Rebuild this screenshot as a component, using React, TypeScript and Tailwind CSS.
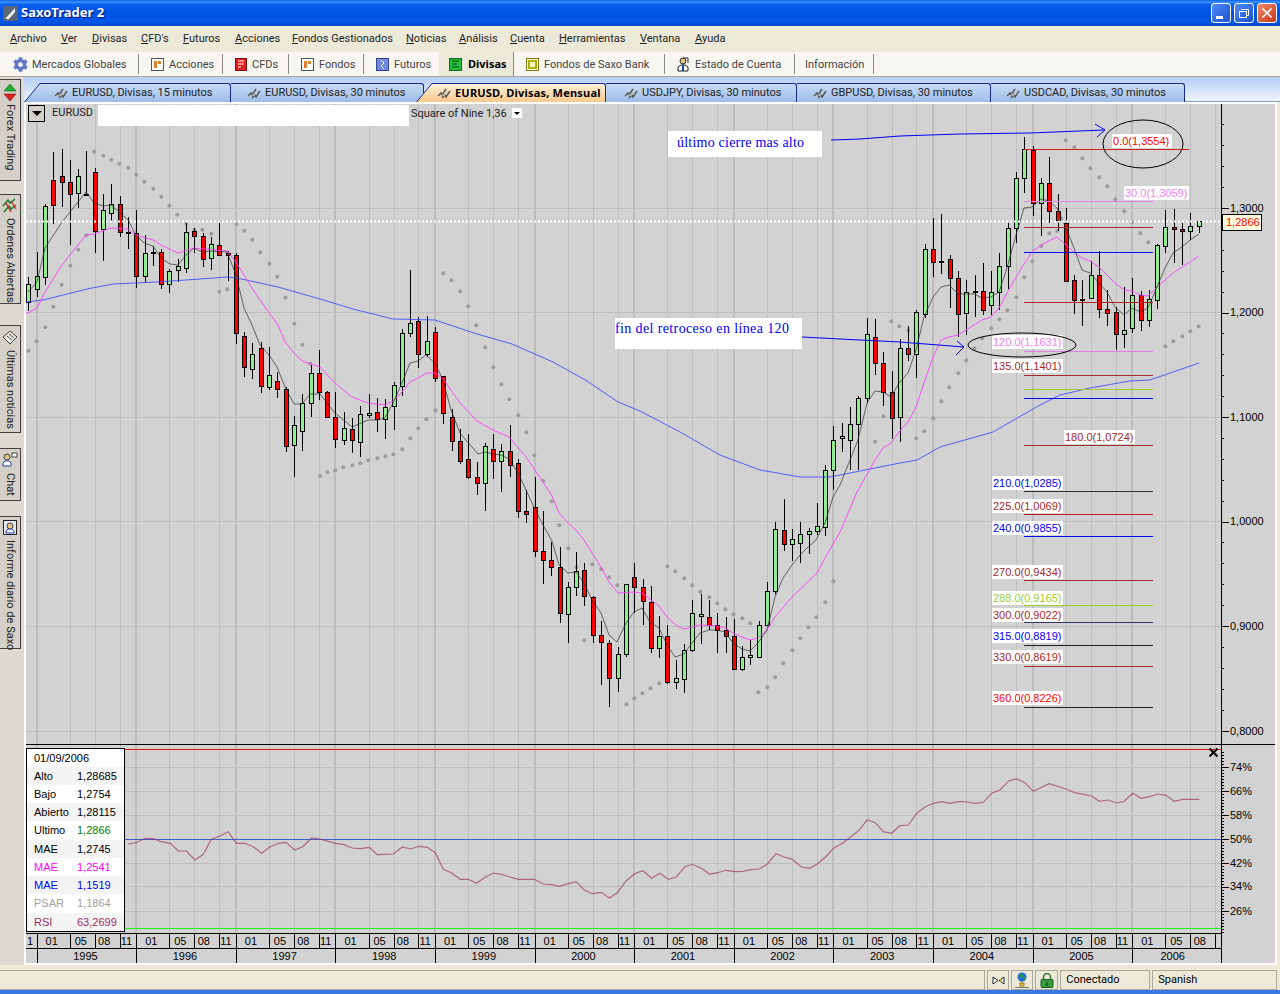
import React from 'react';
import { FaCog } from 'react-icons/fa';
import { X } from 'lucide-react';

type Pt = [number, number];

// crop coords (3x) back to page coords
const crop = (ox: number, oy: number, pts: number[][]): Pt[] => pts.map(([x, y]) => [ox + x / 3, oy + y / 3]);
const line = (pts: Pt[]) => pts.map(([x, y]) => `${x.toFixed(1)},${y.toFixed(1)}`).join(' ');

const monthX = (n: number) => 28.3 + 8.3 * n;

// high, low, body top, body bottom, 1 = green
const candles: number[][] = [
  [277, 311, 284, 302, 1], [252, 297, 276, 289, 1], [204, 285, 206, 277, 1], [152, 224, 180, 205, 0], [149, 207, 176, 182, 0],
  [160, 245, 182, 194, 0], [169, 208, 176, 193, 1], [151, 195, 194, 195, 0], [168, 253, 172, 231, 0], [194, 261, 210, 229, 1],
  [184, 221, 204, 213, 1], [196, 237, 204, 232, 0], [217, 249, 232, 233, 0], [210, 288, 233, 276, 0], [235, 282, 253, 276, 1],
  [246, 266, 252, 253, 0], [249, 289, 252, 284, 0], [269, 293, 271, 284, 1], [259, 282, 266, 270, 1], [223, 273, 232, 268, 1],
  [228, 253, 231, 236, 0], [233, 267, 236, 259, 0], [237, 270, 244, 258, 1], [223, 256, 245, 255, 0], [251, 281, 253, 255, 0],
  [253, 344, 255, 333, 0], [332, 377, 336, 367, 0], [343, 379, 354, 369, 1], [342, 393, 348, 386, 0], [347, 390, 375, 387, 1],
  [372, 398, 381, 389, 0], [387, 452, 389, 446, 0], [416, 477, 425, 445, 1], [394, 451, 403, 431, 1], [365, 417, 373, 403, 1],
  [350, 400, 373, 392, 0], [391, 418, 392, 417, 0], [392, 448, 417, 439, 0], [412, 445, 428, 440, 1], [418, 453, 429, 440, 0],
  [406, 457, 414, 442, 1], [394, 418, 413, 415, 1], [398, 432, 412, 419, 0], [399, 439, 407, 419, 1], [382, 430, 385, 406, 1],
  [329, 396, 333, 386, 1], [270, 337, 323, 333, 1], [317, 368, 321, 354, 0], [316, 357, 341, 354, 1], [327, 382, 332, 378, 0],
  [376, 424, 376, 413, 0], [409, 451, 417, 441, 0], [429, 464, 441, 461, 0], [434, 479, 459, 477, 0], [462, 495, 477, 483, 0],
  [443, 511, 446, 483, 1], [434, 479, 449, 461, 0], [444, 492, 451, 461, 1], [425, 477, 451, 465, 0], [459, 518, 463, 511, 0],
  [490, 523, 511, 514, 0], [477, 557, 507, 551, 0], [511, 584, 551, 560, 0], [542, 576, 560, 567, 0], [547, 623, 567, 613, 0],
  [582, 643, 587, 614, 1], [552, 596, 571, 587, 1], [563, 606, 570, 596, 0], [596, 643, 597, 635, 0], [621, 685, 635, 642, 0],
  [640, 707, 643, 678, 0], [647, 692, 654, 678, 1], [584, 657, 584, 654, 1], [563, 613, 577, 587, 0], [579, 625, 587, 601, 0],
  [586, 653, 602, 648, 0], [616, 658, 636, 648, 1], [625, 684, 636, 682, 0], [660, 689, 678, 682, 1], [644, 693, 650, 679, 1],
  [600, 652, 613, 650, 1], [594, 644, 614, 616, 1], [600, 630, 617, 625, 0], [613, 653, 625, 630, 0], [617, 653, 630, 636, 0],
  [619, 670, 636, 669, 0], [646, 671, 657, 669, 1], [640, 665, 655, 657, 1], [621, 657, 625, 657, 1], [582, 625, 591, 625, 1],
  [522, 594, 529, 591, 1], [499, 551, 530, 544, 0], [529, 561, 539, 544, 1], [522, 563, 534, 543, 1], [528, 554, 531, 534, 1],
  [503, 535, 526, 531, 1], [465, 536, 470, 527, 1], [426, 490, 440, 470, 1], [423, 452, 436, 438, 1], [407, 470, 424, 440, 1],
  [396, 470, 398, 424, 1], [318, 403, 334, 398, 1], [319, 375, 337, 363, 0], [352, 406, 363, 392, 0], [371, 439, 392, 418, 0],
  [339, 442, 348, 417, 1], [326, 361, 348, 354, 0], [310, 378, 312, 354, 1], [244, 318, 249, 314, 1], [218, 277, 249, 262, 0],
  [214, 274, 261, 262, 0], [255, 308, 259, 278, 0], [271, 337, 278, 314, 0], [280, 335, 292, 313, 1], [275, 317, 291, 292, 0],
  [263, 315, 291, 310, 0], [271, 315, 292, 305, 1], [253, 310, 266, 292, 1], [223, 289, 228, 266, 1], [172, 243, 178, 228, 1],
  [137, 193, 149, 178, 1], [146, 216, 150, 203, 0], [178, 236, 183, 203, 1], [157, 223, 183, 211, 0], [194, 231, 211, 220, 0],
  [208, 282, 223, 281, 0], [275, 314, 280, 300, 0], [280, 326, 299, 300, 0], [261, 299, 275, 298, 1], [251, 318, 275, 309, 0],
  [290, 326, 309, 313, 0], [307, 350, 312, 334, 0], [287, 348, 330, 334, 1], [278, 333, 295, 328, 1], [291, 331, 295, 320, 0],
  [290, 327, 299, 320, 1], [244, 309, 245, 300, 1], [210, 253, 227, 246, 1], [209, 263, 227, 229, 0], [223, 265, 229, 231, 0],
  [213, 240, 226, 231, 1], [221, 233, 221, 226, 1],
];

const grayAvg: Pt[] = [[28,292],[37,282],[45,248],[62,222],[86,192],[94,203],[103,206],[111,205],[128,220],[136,235],[144,243],[153,246],[161,258],[170,264],[178,265],[186,255],[194,248],[202,252],[211,251],[227,252],[236,275],[244,308],[252,325],[260,345],[269,355],[277,367],[285,387],[294,404],[302,404],[310,394],[320,394],[335,413],[352,427],[368,420],[377,420],[385,418],[393,403],[402,383],[410,363],[418,361],[426,355],[435,363],[443,380],[451,410],[460,433],[478,454],[485,452],[493,454],[501,455],[509,459],[518,473],[526,490],[534,507],[543,525],[552,541],[559,565],[568,573],[576,572],[584,583],[592,600],[601,613],[609,635],[617,642],[626,623],[634,612],[642,608],[650,622],[659,628],[667,645],[675,657],[684,654],[692,643],[700,633],[709,630],[717,630],[725,632],[733,643],[742,649],[750,651],[758,643],[767,630],[775,597],[783,578],[792,565],[800,555],[808,547],[816,540],[825,523],[833,497],[840,485],[850,460],[858,440],[867,403],[875,391],[883,392],[891,397],[899,383],[908,373],[916,350],[924,317],[933,297],[941,287],[949,285],[958,294],[974,294],[982,298],[991,297],[999,292],[1007,268],[1016,235],[1024,208],[1032,207],[1041,199],[1049,201],[1057,208],[1066,228],[1074,248],[1082,270],[1090,273],[1099,283],[1107,292],[1115,307],[1124,315],[1132,308],[1140,312],[1148,308],[1157,287],[1165,268],[1173,253],[1182,247],[1190,240],[1199,234]];

const pinkAvg: Pt[] = [[26,314],[37,308],[45,292],[62,265],[78,245],[86,235],[94,234],[111,228],[128,229],[136,235],[153,240],[161,245],[178,253],[194,248],[227,251],[236,262],[252,288],[262,303],[278,325],[285,342],[294,353],[302,361],[320,367],[335,383],[352,397],[368,403],[385,405],[393,401],[402,392],[410,382],[418,378],[427,373],[435,373],[443,379],[451,390],[460,403],[477,421],[493,430],[509,437],[526,457],[543,482],[552,496],[559,513],[568,523],[576,530],[584,540],[592,553],[601,567],[609,582],[618,593],[634,592],[642,593],[659,606],[667,617],[677,626],[684,629],[700,625],[717,626],[725,628],[733,633],[742,637],[750,640],[758,638],[767,630],[775,617],[792,597],[817,573],[825,558],[840,532],[857,492],[875,460],[883,448],[891,443],[899,432],[908,422],[916,407],[924,383],[933,357],[941,340],[949,337],[958,335],[966,330],[982,320],[991,317],[999,308],[1007,293],[1016,277],[1024,264],[1032,252],[1041,245],[1057,237],[1066,245],[1074,252],[1082,258],[1090,261],[1099,267],[1115,283],[1124,290],[1132,291],[1140,295],[1148,296],[1157,287],[1165,280],[1173,273],[1199,256]];

const blueAvg: Pt[] = [[26,302],[43,300],[87,289],[113,284],[157,282],[200,279],[227,277],[237,278],[278,287],[320,299],[353,309],[393,319],[435,320],[477,334],[512,344],[553,362],[587,381],[618,402],[640,411],[680,432],[720,455],[760,470],[800,477],[830,477],[860,471],[900,463],[917,460],[940,447],[993,432],[1040,405],[1060,395],[1090,388],[1130,381],[1150,380],[1199,363]];

const rsi: Pt[] = [
  ...crop(0, 740, [[385,312],[409,308],[436,295],[460,296],[484,305],[511,310],[535,333],[559,333],[585,360],[610,343],[634,298],[660,288],[685,275],[709,310],[735,310],[760,320],[785,340],[808,322],[835,310],[858,307],[884,330],[908,320],[935,294]]),
  ...crop(320, 800, [[0,117],[25,124],[48,130],[72,134],[97,144],[121,146],[148,142],[172,164],[220,162],[247,141],[271,147],[298,139],[322,142],[346,158],[370,208],[394,218],[421,238],[445,238],[469,250],[496,232],[520,219],[544,223],[568,230],[595,238],[643,238],[670,252],[694,254],[718,259],[745,251],[769,245],[793,270],[817,281],[844,277],[868,294],[892,278],[919,242],[943,222]]),
  ...crop(640, 770, [[0,305],[10,303],[35,325],[60,310],[85,328],[109,321],[135,290],[157,283],[184,295],[209,312],[233,308],[257,301],[284,305],[308,304],[333,299],[358,297],[382,282],[408,251],[433,261],[457,268],[484,291],[508,295],[532,282],[557,260],[583,233],[607,220],[631,202],[658,180],[682,149],[706,158],[730,185],[755,190],[779,167],[805,165],[830,130],[856,110],[880,100],[905,95],[930,100]]),
  ...crop(960, 740, [[0,184],[20,186],[47,190],[70,187],[95,160],[120,150],[147,122],[170,117],[195,128],[220,154],[268,131],[318,147],[345,158],[395,168],[418,184],[443,180],[470,189],[493,184],[518,160],[543,175],[568,170],[593,162],[618,166],[643,184],[668,178],[718,178]]),
];

const psar: Pt[] = [
  ...crop(0, 125, [[85,677],[110,649],[136,607],[160,545],[185,479],[211,422],[235,374],[259,331],[283,80],[310,92],[334,104],[358,116],[385,128],[409,149],[433,170],[460,191],[484,215],[508,242],[532,269],[559,296],[583,315],[607,314],[634,326],[658,500],[682,493],[709,298],[733,317],[757,344],[781,382],[808,416],[832,455],[856,518],[883,596],[907,659],[931,716]]),
  ...crop(320, 220, [[0,767],[22,757],[46,751],[70,742],[97,736],[121,730],[145,721],[172,715],[196,709],[220,703],[247,688],[271,655],[295,625],[319,598],[346,571],[370,160],[394,181],[421,214],[445,259],[469,316],[496,382],[520,442],[544,493],[568,538],[595,586],[619,637],[643,706]]),
  ...crop(520, 480, [[70,3],[95,64],[118,136],[145,205],[169,262],[193,481],[217,253],[244,268],[268,292],[292,316],[319,673],[343,655],[367,640],[391,625],[418,610],[442,259],[466,274],[493,295],[517,316],[541,335],[568,352],[592,370],[616,388],[640,403],[667,415],[691,430],[715,637],[742,622],[766,592],[790,550],[817,511],[841,475],[865,442],[889,412],[916,367],[940,304]]),
  [[841,557],[850,530],[858,503],[866,470]],
  ...crop(780, 120, [[285,965],[310,889],[334,604],[358,619],[385,631],[409,955],[433,934],[460,895],[484,844],[508,802],[535,760],[559,721],[583,685],[607,655],[634,625],[658,598]]),
  ...crop(1000, 120, [[22,571],[49,532],[73,472],[97,424],[124,378],[148,340],[172,333],[197,61],[223,82],[247,115],[271,145],[298,172],[322,199],[346,238],[373,274],[397,307],[421,340],[445,367],[472,391],[496,679],[520,664],[547,649],[571,634],[596,619]]),
];

const fibLines: [number, string, number?][] = [
  [149, '#d02020', 1189], [201.5, '#e080e0'], [227, '#a52a2a'], [252, '#0000ff'], [302, '#b22222'], [351, '#e080e0'],
  [375.5, '#a52a2a'], [389, '#9acd32'], [398, '#0000ff'], [445, '#a52a2a'], [491, '#303030'], [514, '#b22222'],
  [536, '#0000ff'], [580, '#a52a2a'], [605, '#9acd32'], [622, '#333366'], [645, '#222222'], [666, '#a52a2a'], [707, '#222222'],
];

const fibLabels: [string, number, number, number, string][] = [
  ['0.0(1,3554)', 1113, 141, 60, '#ff0000'],
  ['30.0(1,3059)', 1125, 193, 65, '#ee82ee'],
  ['120.0(1,1631)', 993, 342, 71, '#ee82ee'],
  ['135.0(1,1401)', 993, 366, 71, '#a52a2a'],
  ['180.0(1,0724)', 1065, 437, 71, '#a52a2a'],
  ['210.0(1,0285)', 993, 483, 71, '#0000ff'],
  ['225.0(1,0069)', 993, 506, 71, '#a52a2a'],
  ['240.0(0,9855)', 993, 528, 71, '#0000ff'],
  ['270.0(0,9434)', 993, 572, 71, '#a52a2a'],
  ['288.0(0,9165)', 993, 598, 71, '#9acd32'],
  ['300.0(0,9022)', 993, 615, 71, '#a52a2a'],
  ['315.0(0,8819)', 993, 636, 71, '#0000ff'],
  ['330.0(0,8619)', 993, 657, 71, '#a52a2a'],
  ['360.0(0,8226)', 993, 698, 71, '#ff0000'],
];

const years = ['1995', '1996', '1997', '1998', '1999', '2000', '2001', '2002', '2003', '2004', '2005', '2006'];
const monthSteps: [string, number, number][] = [['01', 0, 4], ['05', 4, 7], ['08', 7, 10], ['11', 10, 12]];

const priceLabels: [string, number][] = [['1,3000', 208], ['1,2000', 312], ['1,1000', 417], ['1,0000', 521], ['0,9000', 626], ['0,8000', 731]];
const rsiLabels: [string, number][] = [['74%', 767], ['66%', 791], ['58%', 815], ['50%', 839], ['42%', 863], ['34%', 886], ['26%', 911]];

const menuItems = [
  { first: 'A', rest: 'rchivo', w: 'w-[51px]' }, { first: 'V', rest: 'er', w: 'w-[31px]' }, { first: 'D', rest: 'ivisas', w: 'w-[49px]' },
  { first: 'C', rest: "FD's", w: 'w-[42px]' }, { first: 'F', rest: 'uturos', w: 'w-[52px]' }, { first: 'A', rest: 'cciones', w: 'w-[57px]' },
  { first: 'F', rest: 'ondos Gestionados', w: 'w-[114px]' }, { first: 'N', rest: 'oticias', w: 'w-[53px]' }, { first: 'A', rest: 'nálisis', w: 'w-[51px]' },
  { first: 'C', rest: 'uenta', w: 'w-[49px]' }, { first: 'H', rest: 'erramientas', w: 'w-[81px]' }, { first: 'V', rest: 'entana', w: 'w-[55px]' },
  { first: 'A', rest: 'yuda', w: 'w-[50px]' },
];

const PageIcon = ({ bg, fg }: { bg: string; fg: string }) => (
  <svg width="13" height="13" viewBox="0 0 13 13" className="shrink-0">
    <rect x="0.5" y="0.5" width="12" height="12" fill={bg} stroke="#555" />
    <path d="M3 3h3v7H3zM7 3h3v3H7z" fill={fg} />
  </svg>
);

const CfdIcon = () => (
  <svg width="12" height="13" viewBox="0 0 12 13" className="shrink-0">
    <rect x="0.5" y="0.5" width="11" height="12" fill="#e02020" stroke="#7a1010" />
    <path d="M3 3h6M3 6h6M3 9h3" stroke="#fff" />
  </svg>
);

const FuturesIcon = () => (
  <svg width="13" height="13" viewBox="0 0 13 13" className="shrink-0">
    <rect x="0.5" y="0.5" width="12" height="12" fill="#6f88e0" stroke="#33408a" />
    <path d="M5 2l3 3-3 3 3 3" stroke="#fff" fill="none" />
  </svg>
);

const FxIcon = () => (
  <svg width="13" height="13" viewBox="0 0 13 13" className="shrink-0">
    <rect x="0.5" y="0.5" width="12" height="12" fill="#1fc13a" stroke="#0c6a1a" />
    <path d="M3 3h7M3 6h5M3 9h7" stroke="#0a3a10" />
  </svg>
);

const SaxoFundIcon = () => (
  <svg width="13" height="13" viewBox="0 0 13 13" className="shrink-0">
    <rect x="0.5" y="0.5" width="12" height="12" fill="#fff8c0" stroke="#7a7a20" />
    <rect x="3" y="3" width="7" height="7" fill="none" stroke="#a8b400" strokeWidth="2" />
  </svg>
);

const PersonIcon = () => (
  <svg width="13" height="15" viewBox="0 0 13 15" className="shrink-0">
    <circle cx="6" cy="4" r="3" fill="#e8c080" stroke="#333" />
    <path d="M6 1h5v5" fill="none" stroke="#333" />
    <path d="M1 14v-4l3-2h4l3 2v4z" fill="#fff" stroke="#222" />
    <path d="M6 8v6" stroke="#2040c0" strokeWidth="2" />
  </svg>
);

const TabChartIcon = () => (
  <svg width="14" height="12" viewBox="0 0 14 12" className="shrink-0">
    <path d="M1 9l3-3 1 2 4-6M5 11l3-3 1 2 4-6" fill="none" stroke="#555" strokeWidth="1.4" />
    <path d="M3 10l3-3 1 2 4-6" fill="none" stroke="#c8c8b8" strokeWidth="0.8" />
  </svg>
);

const toolbarItems = [
  { label: 'Acciones', icon: <PageIcon bg="#fff" fg="#e0802a" />, w: 'w-[84px]', pl: 'pl-[12px]' },
  { label: 'CFDs', icon: <CfdIcon />, w: 'w-[66px]', pl: 'pl-[12px]' },
  { label: 'Fondos', icon: <PageIcon bg="#fff" fg="#e0802a" />, w: 'w-[75px]', pl: 'pl-[12px]' },
  { label: 'Futuros', icon: <FuturesIcon />, w: 'w-[76px]', pl: 'pl-[12px]' },
];

const Toolbar = () => (
  <div className="h-[25px] flex items-stretch bg-[#f7f6f1] border-b border-[#aca899] text-[11px] leading-[18px] text-[#444]">
    <div className="w-[138px] flex items-center gap-[4px] pl-[13px]">
      <FaCog className="text-[#6478c8] shrink-0" size={15} />
      <span className="mt-[1px]">Mercados Globales</span>
    </div>
    {toolbarItems.map((item) => (
      <div key={item.label} className={`${item.w} ${item.pl} flex items-center gap-[5px] border-l border-[#8c8c84] my-[2px]`}>
        {item.icon}
        <span className="mt-[1px]">{item.label}</span>
      </div>
    ))}
    <div className="w-[75px] pl-[10px] flex items-center gap-[6px] bg-[#ece9d8] border-r border-[#8c8c84] text-black font-bold font-['Noto_Sans',sans-serif]">
      <FxIcon />
      <span>Divisas</span>
    </div>
    <div className="w-[150px] pl-[12px] flex items-center gap-[5px] my-[2px]">
      <SaxoFundIcon />
      <span className="mt-[1px]">Fondos de Saxo Bank</span>
    </div>
    <div className="w-[130px] pl-[12px] flex items-center gap-[5px] border-l border-[#8c8c84] my-[2px]">
      <PersonIcon />
      <span className="mt-[1px]">Estado de Cuenta</span>
    </div>
    <div className="w-[80px] pl-[10px] pt-[1px] flex items-center border-x border-[#8c8c84] my-[2px]">Información</div>
  </div>
);

const ChartTab = ({ label, active, slant, w, pl, ml, clip }: { label: string; active?: boolean; slant?: boolean; w: string; pl: string; ml?: string; clip?: string }) => (
  <div className={`${w} ${ml ?? ''} relative h-[19px] shrink-0`}>
    <div
      className={`${clip ?? ''} ${pl} h-full flex items-center gap-[4px] border-t border-r border-[#1a2a8c] rounded-tr-[3px] whitespace-nowrap overflow-hidden ${
        active
          ? "bg-[linear-gradient(180deg,#fdeed8,#fbc98e)] font-bold text-black tracking-[0.2px] font-['Noto_Sans',sans-serif]"
          : 'bg-[linear-gradient(180deg,#c6daf6,#9fbde8)] text-[#222]'
      }`}
    >
      <TabChartIcon />
      <span>{label}</span>
    </div>
    {slant && (
      <svg width="17" height="19" viewBox="0 0 17 19" className="absolute left-0 top-0">
        <path d="M0.5 19L16 0.5" stroke="#1a2a8c" fill="none" />
      </svg>
    )}
  </div>
);

const TabBar = () => (
  <div className="h-[25px] pt-[6px] flex items-start bg-[linear-gradient(180deg,#b4cdf5,#eef3fd)] text-[11px] border-b border-[#7f9db9]">
    <ChartTab label="EURUSD, Divisas, 15 minutos" w="w-[207px]" pl="pl-[30px]" slant clip="[clip-path:polygon(16px_0,100%_0,100%_100%,0_100%)]" />
    <ChartTab label="EURUSD, Divisas, 30 minutos" w="w-[193px]" pl="pl-[16px]" />
    <div className="relative z-10 -ml-[8px]">
      <ChartTab label="EURUSD, Divisas, Mensual" active w="w-[190px]" pl="pl-[21px]" slant clip="[clip-path:polygon(16px_0,100%_0,100%_100%,0_100%)]" />
    </div>
    <ChartTab label="USDJPY, Divisas, 30 minutos" w="w-[191px]" pl="pl-[18px]" />
    <ChartTab label="GBPUSD, Divisas, 30 minutos" w="w-[194px]" pl="pl-[16px]" />
    <ChartTab label="USDCAD, Divisas, 30 minutos" w="w-[194px]" pl="pl-[15px]" />
  </div>
);

const SideTab = ({ label, icon, h, mt, gap }: { label: string; icon: React.ReactNode; h: string; mt: string; gap: string }) => (
  <div className={`${h} ${mt} ${gap} w-[21px] flex flex-col items-center pt-[3px] bg-[#d4d0c8] border-y border-r border-[#404040] text-[11px] text-[#222] shrink-0`}>
    {icon}
    <span className="[writing-mode:vertical-rl] whitespace-nowrap leading-[16px]">{label}</span>
  </div>
);

const Sidebar = () => (
  <div className="w-[24px] shrink-0 bg-[#dedad2]">
    <SideTab
      h="h-[102px]" mt="mt-[2px]" gap="gap-[2px]" label="Forex Trading"
      icon={
        <svg width="14" height="19" viewBox="0 0 14 19" className="shrink-0">
          <path d="M7 1l6 7H1z" fill="#20b030" stroke="#0a5a14" strokeWidth="0.6" />
          <path d="M7 18L1 11h12z" fill="#e02020" stroke="#7a1010" strokeWidth="0.6" />
        </svg>
      }
    />
    <SideTab
      h="h-[110px]" mt="mt-[13px]" gap="gap-[3px]" label="Ordenes Abiertas"
      icon={
        <svg width="16" height="17" viewBox="0 0 16 17" className="shrink-0">
          <path d="M1 8l5-6 2 3 5-4M2 14l5-6 2 3 5-4" fill="none" stroke="#108030" strokeWidth="1.6" />
          <path d="M4 5l5 9M9 3l5 8" stroke="#e02020" strokeWidth="1.4" />
        </svg>
      }
    />
    <SideTab
      h="h-[108px]" mt="mt-[21px]" gap="gap-[4px]" label="Últimas noticias"
      icon={
        <svg width="16" height="17" viewBox="0 0 16 17" className="shrink-0">
          <path d="M8 2l7 6-7 7-7-7z" fill="#e8e8e0" stroke="#444" />
          <path d="M5 7l5 4M7 5l5 4" stroke="#555" />
        </svg>
      }
    />
    <SideTab
      h="h-[53px]" mt="mt-[15px]" gap="gap-[6px]" label="Chat"
      icon={
        <svg width="16" height="15" viewBox="0 0 16 15" className="shrink-0">
          <circle cx="5" cy="5" r="3" fill="#e8c080" stroke="#444" />
          <path d="M1 14v-3l2-2h4l2 2v3z" fill="#fff" stroke="#2040a0" />
          <rect x="10" y="1" width="5" height="4" fill="#fff" stroke="#444" />
        </svg>
      }
    />
    <SideTab
      h="h-[133px]" mt="mt-[15px]" gap="gap-[5px]" label="Informe diario de Saxo"
      icon={
        <svg width="14" height="15" viewBox="0 0 14 15" className="shrink-0">
          <rect x="0.5" y="0.5" width="13" height="14" fill="#dfe8f0" stroke="#222" />
          <circle cx="7" cy="6" r="3" fill="#e8c080" stroke="#444" />
          <path d="M3 13v-2l2-2h4l2 2v2z" fill="#fff" stroke="#2040a0" />
        </svg>
      }
    />
  </div>
);

const tableRows = [
  { label: 'Alto', value: '1,28685', h: 'h-[18px]', shade: true, label_c: 'text-black', value_c: 'text-black' },
  { label: 'Bajo', value: '1,2754', h: 'h-[18px]', shade: false, label_c: 'text-black', value_c: 'text-black' },
  { label: 'Abierto', value: '1,28115', h: 'h-[18px]', shade: true, label_c: 'text-black', value_c: 'text-black' },
  { label: 'Ultimo', value: '1,2866', h: 'h-[19px]', shade: false, label_c: 'text-black', value_c: 'text-[#008000]' },
  { label: 'MAE', value: '1,2745', h: 'h-[18px]', shade: true, label_c: 'text-black', value_c: 'text-black' },
  { label: 'MAE', value: '1,2541', h: 'h-[18px]', shade: false, label_c: 'text-[#ff00ff]', value_c: 'text-[#ff00ff]' },
  { label: 'MAE', value: '1,1519', h: 'h-[18px]', shade: true, label_c: 'text-[#0000ff]', value_c: 'text-[#0000ff]' },
  { label: 'PSAR', value: '1,1864', h: 'h-[19px]', shade: false, label_c: 'text-[#a0a0a0]', value_c: 'text-[#a0a0a0]' },
  { label: 'RSI', value: '63,2699', h: 'h-[18px]', shade: true, label_c: 'text-[#9b2d5e]', value_c: 'text-[#9b2d5e]' },
];

const ValueTable = () => (
  <div className="absolute left-0 top-[644px] w-[99px] border border-black bg-white text-[11px] font-['Liberation_Sans',sans-serif]">
    <div className="h-[18px] pl-[7px] flex items-center">01/09/2006</div>
    {tableRows.map((row, i) => (
      <div key={i} className={`${row.h} pl-[7px] flex items-center ${row.shade ? 'bg-[#f4f4f4]' : 'bg-white'}`}>
        <span className={`w-[43px] ${row.label_c}`}>{row.label}</span>
        <span className={row.value_c}>{row.value}</span>
      </div>
    ))}
  </div>
);

const ChartSvg = () => {
  const verticals: { x: number; year: boolean }[] = [];
  years.forEach((_, i) => {
    const n = 1 + 12 * i;
    verticals.push({ x: monthX(n), year: true });
    [4, 7, 10].forEach((m) => verticals.push({ x: monthX(n + m), year: false }));
  });
  const mainTicks: number[] = [];
  for (let k = -4; k <= 25; k++) mainTicks.push(k);
  const rsiTicks: number[] = [];
  for (let y = 752; y < 933; y += 3) rsiTicks.push(y);

  return (
    <svg width="1249" height="859" viewBox="26 104 1249 859" className="block font-['Liberation_Sans',sans-serif]">
      <g shapeRendering="crispEdges">
        {verticals.map((v, i) => (
          <line key={i} x1={Math.round(v.x)} x2={Math.round(v.x)} y1={104} y2={933} stroke={v.year ? '#bcbcbc' : '#c0c0c0'} strokeWidth={v.year ? 2 : 1} />
        ))}
        {[...priceLabels, ...rsiLabels].map(([t, y]) => (
          <line key={t} x1={26} x2={1221} y1={y + 0.5} y2={y + 0.5} stroke="#bebebe" />
        ))}
      </g>

      {psar.map(([x, y], i) => (
        <circle key={i} cx={x} cy={y} r={2} fill="#9c9c9c" />
      ))}

      <g shapeRendering="crispEdges">
        {candles.map((c, i) => {
          const x = Math.round(monthX(i));
          const doji = c[3] - c[2] <= 1;
          return (
            <g key={i}>
              <line x1={x + 0.5} x2={x + 0.5} y1={c[0]} y2={c[1]} stroke="#000" />
              {doji ? (
                <rect x={x - 2} y={c[2]} width={5} height={2} fill="#000" />
              ) : (
                <rect x={x - 1.5} y={c[2] + 0.5} width={4} height={c[3] - c[2]} fill={c[4] ? '#90ee90' : '#ff0000'} stroke="#000" />
              )}
            </g>
          );
        })}
      </g>

      <polyline points={line(blueAvg)} fill="none" stroke="#4048ff" strokeOpacity="0.85" />
      <polyline points={line(pinkAvg)} fill="none" stroke="#ff40ff" strokeOpacity="0.9" />
      <polyline points={line(grayAvg)} fill="none" stroke="#303030" strokeOpacity="0.7" />

      <g shapeRendering="crispEdges">
        {fibLines.map(([y, c, end], i) => (
          <line key={i} x1={1024} x2={end ?? 1153} y1={Math.floor(y) + 0.5} y2={Math.floor(y) + 0.5} stroke={c} />
        ))}
      </g>
      {fibLabels.map(([t, x, y, w, c]) => (
        <g key={t}>
          <rect x={x - 1} y={y - 7} width={w} height={14} fill="#fff" />
          <text x={x} y={y + 4} fontSize="11" fill={c}>{t}</text>
        </g>
      ))}

      <ellipse cx={1143} cy={144} rx={40} ry={24} fill="none" stroke="#000" />
      <ellipse cx={1022} cy={345} rx={54} ry={12} fill="none" stroke="#000" />

      <polyline points="831,140 860,139 900,136 960,134 1030,133 1104,130" fill="none" stroke="#0000ff" />
      <polyline points="1095,124 1105,130 1097,137" fill="none" stroke="#0000ff" />
      <polyline points="802,337 840,339 900,342 964,347" fill="none" stroke="#0000ff" />
      <polyline points="957,341 964,347 956,355" fill="none" stroke="#0000ff" />

      <rect x={668} y={131} width={154} height={26} fill="#fff" />
      <text x={677} y={147} fontSize="14" letterSpacing="0.22" fill="#0000ff" fontFamily="'Liberation Serif', serif">último cierre mas alto</text>
      <rect x={615} y={318} width={187} height={31} fill="#fff" />
      <text x={615} y={333} fontSize="14" letterSpacing="0.38" fill="#0000ff" fontFamily="'Liberation Serif', serif">fin del retroceso en línea 120</text>

      <line x1={26} x2={1221} y1={221.5} y2={221.5} stroke="#fff" strokeWidth="2" strokeDasharray="2 2" />

      <line x1={26} x2={1275} y1={744.5} y2={744.5} stroke="#000" shapeRendering="crispEdges" />
      <line x1={26} x2={1221} y1={749.5} y2={749.5} stroke="#e01010" shapeRendering="crispEdges" />
      <line x1={26} x2={1221} y1={839.5} y2={839.5} stroke="#3a5fcd" shapeRendering="crispEdges" />
      <line x1={26} x2={1221} y1={928.5} y2={928.5} stroke="#20f020" strokeWidth="1.5" shapeRendering="crispEdges" />
      <polyline points={line(rsi)} fill="none" stroke="#9b2d5e" strokeOpacity="0.65" strokeWidth="1.2" />

      <path d="M1209.5 748.5l8 8m0-8l-8 8" stroke="#000" strokeWidth="2" />

      {/* axes */}
      <g shapeRendering="crispEdges">
        <line x1={1221.5} x2={1221.5} y1={104} y2={933} stroke="#000" />
        {mainTicks.map((k) => {
          const y = Math.round(208 + k * 20.9) + 0.5;
          if (y > 744 || y < 104) return null;
          return <line key={k} x1={1221} x2={k % 5 === 0 ? 1229 : 1224} y1={y} y2={y} stroke="#000" />;
        })}
        {rsiTicks.map((y) => (
          <line key={y} x1={1221} x2={(y - 839 + 240) % 24 === 0 ? 1229 : 1224} y1={y + 0.5} y2={y + 0.5} stroke="#000" />
        ))}
        <line x1={26} x2={1222} y1={933.5} y2={933.5} stroke="#000" />
        <line x1={26} x2={1222} y1={948.5} y2={948.5} stroke="#000" />
        <line x1={1221.5} x2={1221.5} y1={933} y2={963} stroke="#000" />
      </g>

      {priceLabels.map(([t, y]) => (
        <text key={t} x={1230} y={y + 4} fontSize="11" fill="#000">{t}</text>
      ))}
      {rsiLabels.map(([t, y]) => (
        <text key={t} x={1230} y={y + 4} fontSize="11" fill="#000">{t}</text>
      ))}

      <rect x={1222.5} y={214.5} width={39} height={16} fill="#ffffe0" stroke="#000" shapeRendering="crispEdges" />
      <text x={1226} y={226} fontSize="11" fill="#ff0000">1,2866</text>

      <text x={30} y={945} fontSize="11" textAnchor="middle">1</text>
      {years.map((year, i) => {
        const n = 1 + 12 * i;
        const endN = i === years.length - 1 ? n + 10 : n + 12;
        return (
          <g key={year}>
            <line x1={Math.round(monthX(n)) + 0.5} x2={Math.round(monthX(n)) + 0.5} y1={933} y2={963} stroke="#000" shapeRendering="crispEdges" />
            <text x={(monthX(n) + monthX(endN)) / 2 - 1} y={960} fontSize="11" textAnchor="middle">{year}</text>
            {monthSteps.map(([m, a, b]) =>
              i === years.length - 1 && m === '11' ? null : (
                <g key={m}>
                  <line x1={Math.round(monthX(n + b)) + 0.5} x2={Math.round(monthX(n + b)) + 0.5} y1={933} y2={948} stroke="#000" shapeRendering="crispEdges" />
                  <text x={(monthX(n + a) + monthX(n + b)) / 2 - (m === '08' ? 3 : 1.5)} y={945} fontSize="11" textAnchor="middle">{m}</text>
                </g>
              )
            )}
          </g>
        );
      })}
    </svg>
  );
};

const ChartControls = () => (
  <div className="absolute left-[2px] top-[1px] h-[21px] flex items-start text-[11px] text-[#222]">
    <div className="w-[17px] h-[17px] flex items-center justify-center border border-black bg-[#d4d0c8]">
      <div className="w-0 h-0 border-x-[5px] border-x-transparent border-t-[5px] border-t-black" />
    </div>
    <span className="ml-[7px] w-[46px] leading-[15px]">EURUSD</span>
    <div className="w-[311px] h-[21px] bg-white" />
    <span className="ml-[2px] w-[101px] leading-[17px]">Square of Nine 1,36</span>
    <div className="w-[10px] h-[10px] mt-[3px] flex items-center justify-center bg-white">
      <div className="w-0 h-0 border-x-[3px] border-x-transparent border-t-[3px] border-t-black" />
    </div>
  </div>
);

const StatusBar = () => (
  <div className="h-[25px] pt-[5px] flex gap-[2px] pr-[3px] bg-[#ece9d8] text-[11px] text-black">
    <div className="w-[987px] h-[20px] border border-[#aca899] border-l-0" />
    <div className="w-[22px] h-[20px] border border-[#aca899] flex items-center justify-center">
      <svg width="13" height="9" viewBox="0 0 13 9">
        <path d="M1 1l5 3.5L1 8zM12 1L7 4.5 12 8z" fill="#fff" stroke="#222" />
        <path d="M9 3v3" stroke="#c8a040" strokeWidth="2" />
      </svg>
    </div>
    <div className="w-[22px] h-[20px] border border-[#aca899] flex items-center justify-center">
      <svg width="14" height="17" viewBox="0 0 14 17">
        <circle cx="7" cy="5" r="4.5" fill="#1f70d0" />
        <path d="M5 2l3 1-1 3-3-1zM9 5l2 1-2 2z" fill="#28a030" />
        <rect x="5" y="11" width="4" height="3" fill="#f0c040" stroke="#a08020" />
        <path d="M0 15.5h14M7 9v2" stroke="#777" />
      </svg>
    </div>
    <div className="w-[23px] h-[20px] border border-[#aca899] flex items-center justify-center">
      <svg width="14" height="15" viewBox="0 0 14 15">
        <path d="M3.5 7V4a3.5 3.5 0 017 0v3" fill="none" stroke="#2a7a30" strokeWidth="1.5" />
        <rect x="1" y="6.5" width="12" height="8" rx="1" fill="#38a040" stroke="#1a5a20" />
        <path d="M7 8.5v3M5.5 12h3" stroke="#0c3010" />
      </svg>
    </div>
    <div className="w-[90px] h-[20px] pl-[5px] border border-[#aca899] flex items-center">Conectado</div>
    <div className="w-[125px] h-[20px] pl-[5px] border border-[#aca899] flex items-center">Spanish</div>
  </div>
);

const App = () => {
  return (
    <div className="w-[1280px] h-[994px] flex flex-col overflow-hidden bg-[#ece9d8] font-['Roboto',sans-serif]">
      <div className="h-[26px] shrink-0 flex items-center pl-[3px] pr-[3px] bg-[linear-gradient(180deg,#0a5fe8_0%,#3d95ff_8%,#0a62ee_16%,#0054e3_50%,#0056e6_85%,#0046c4_100%)]">
        <svg width="15" height="15" viewBox="0 0 15 15" className="shrink-0">
          <rect width="15" height="15" fill="#5a6678" />
          <path d="M2 13L12 2v4l-6 7z" fill="#f2f2f2" />
        </svg>
        <span className="ml-[3px] text-[13px] font-bold text-white font-['Noto_Sans',sans-serif] [text-shadow:1px_1px_1px_#0f1089]">SaxoTrader 2</span>
        <div className="ml-auto flex gap-[3px]">
          <div className="w-[20px] h-[20px] flex items-end justify-start pl-[4px] pb-[3px] rounded-[3px] border border-white bg-[linear-gradient(135deg,#4f8df5,#1d50d0)]">
            <div className="w-[7px] h-[3px] bg-white" />
          </div>
          <div className="w-[20px] h-[20px] flex items-center justify-center rounded-[3px] border border-white bg-[linear-gradient(135deg,#4f8df5,#1d50d0)]">
            <svg width="12" height="12" viewBox="0 0 12 12">
              <path d="M3.5 2.5h7v6h-2M1.5 4.5h7v6h-7z" fill="none" stroke="#fff" />
              <path d="M3 2h8v1H3zM1 4h8v1H1z" fill="#fff" />
            </svg>
          </div>
          <div className="w-[20px] h-[20px] flex items-center justify-center rounded-[3px] border border-white bg-[linear-gradient(135deg,#ec8a6c,#c8391a)]">
            <X size={16} strokeWidth={2.5} className="text-white" />
          </div>
        </div>
      </div>

      <div className="h-[26px] shrink-0 flex items-center pl-[10px] text-[11px] text-[#222] bg-[#ece9d8]">
        {menuItems.map((m) => (
          <div key={m.first + m.rest} className={`${m.w} shrink-0`}>
            <span className="underline">{m.first}</span>
            {m.rest}
          </div>
        ))}
      </div>

      <Toolbar />

      <div className="h-[888px] shrink-0 flex">
        <Sidebar />
        <div className="w-[1256px] flex flex-col">
          <TabBar />
          <div className="w-[1253px] h-[863px] p-[2px] bg-white">
            <div className="relative w-[1249px] h-[859px] bg-[#d2d2d2] overflow-hidden">
              <ChartSvg />
              <ChartControls />
              <ValueTable />
            </div>
          </div>
        </div>
      </div>

      <StatusBar />
      <div className="h-[4px] shrink-0 bg-[#3878e0]" />
    </div>
  );
};

export default App;
